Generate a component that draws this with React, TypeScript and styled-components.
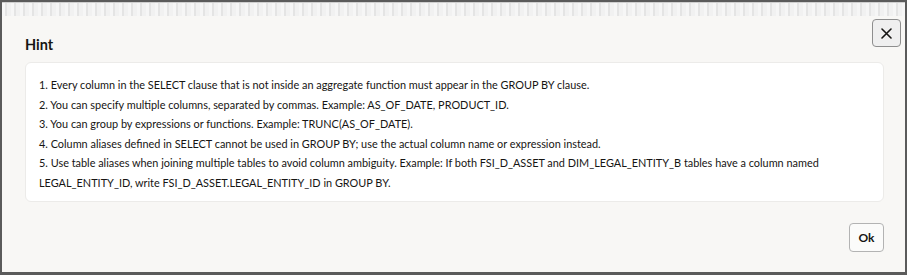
import React from "react";
import styled, { createGlobalStyle } from "styled-components";

const Global = createGlobalStyle`
  html, body { margin: 0; padding: 0; background: #ffffff; }
  * { box-sizing: border-box; }
`;

const Frame = styled.div`
  width: 907px;
  height: 275px;
  border: 2px solid #5b5b5b;
  border-bottom-width: 3px;
  display: flex;
  flex-direction: column;
  background: #f8f7f5;
  font-family: Lato, "Noto Sans", sans-serif;
  color: #161513;
  overflow: hidden;
`;

const Backdrop = styled.div`
  height: 14px;
  flex: none;
  border-top: 1px solid #cfcfcf;
  background:
    repeating-linear-gradient(90deg, rgba(255,255,255,0.55) 0 3px, rgba(0,0,0,0.03) 3px 5px, rgba(255,255,255,0.3) 5px 9px),
    #ebebeb;
`;

const Dialog = styled.div`
  flex: 1;
  display: flex;
  flex-direction: column;
  padding: 0 21px 0 23px;
`;

const Header = styled.div`
  display: flex;
  justify-content: space-between;
  align-items: flex-start;
  height: 46px;
  padding-top: 3px;
`;

const Title = styled.h1`
  margin: 16px 0 0 0;
  font-size: 14.5px;
  line-height: 20px;
  font-weight: 700;
`;

const IconButton = styled.button`
  width: 29px;
  height: 28px;
  margin-right: -17px;
  padding: 0;
  display: flex;
  align-items: center;
  justify-content: center;
  border: 1px solid #8e8e8e;
  border-radius: 4px;
  background: #efefef;
  color: #161513;
`;

const Card = styled.div`
  background: #ffffff;
  border: 1px solid #ecebe9;
  border-radius: 6px;
  height: 140px;
  padding: 12px 12px 10px 13px;
`;

const Line = styled.p`
  margin: 0;
  font-size: 10.9px;
  line-height: 19.5px;
  white-space: nowrap;
`;

const Footer = styled.div`
  display: flex;
  justify-content: flex-end;
  margin-top: 21px;
`;

const Button = styled.button`
  width: 35px;
  height: 29px;
  padding: 0;
  border: 1px solid #b3b3b3;
  border-radius: 4px;
  background: #fbfbfa;
  font-family: Lato, "Noto Sans", sans-serif;
  font-size: 12px;
  font-weight: 700;
  color: #161513;
`;

const lines = [
  "1. Every column in the SELECT clause that is not inside an aggregate function must appear in the GROUP BY clause.",
  "2. You can specify multiple columns, separated by commas. Example: AS_OF_DATE, PRODUCT_ID.",
  "3. You can group by expressions or functions. Example: TRUNC(AS_OF_DATE).",
  "4. Column aliases defined in SELECT cannot be used in GROUP BY; use the actual column name or expression instead.",
  "5. Use table aliases when joining multiple tables to avoid column ambiguity. Example: If both FSI_D_ASSET and DIM_LEGAL_ENTITY_B tables have a column named",
  "LEGAL_ENTITY_ID, write FSI_D_ASSET.LEGAL_ENTITY_ID in GROUP BY.",
];

export default function App() {
  return (
    <>
      <Global />
      <Frame>
        <Backdrop />
        <Dialog>
          <Header>
            <Title>Hint</Title>
            <IconButton aria-label="Close">
              <svg width="11" height="11" viewBox="0 0 11 11">
                <path d="M1 1L10 10M10 1L1 10" stroke="#161513" strokeWidth="1.6" strokeLinecap="round" />
              </svg>
            </IconButton>
          </Header>
          <Card>
            {lines.map((l) => (
              <Line key={l}>{l}</Line>
            ))}
          </Card>
          <Footer>
            <Button>Ok</Button>
          </Footer>
        </Dialog>
      </Frame>
    </>
  );
}
